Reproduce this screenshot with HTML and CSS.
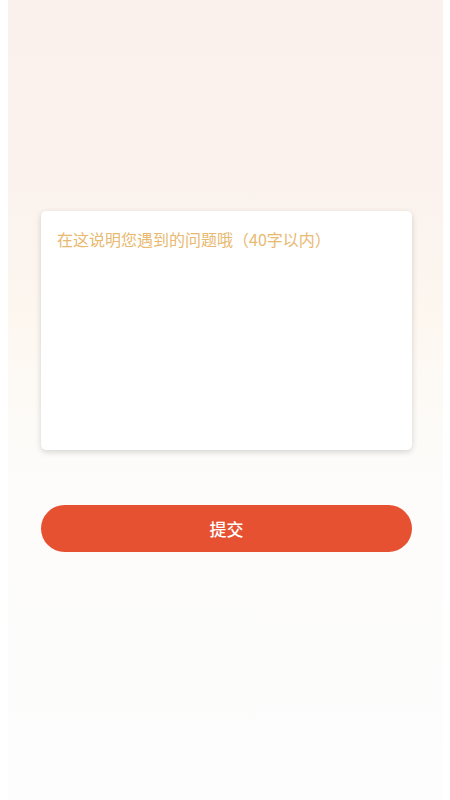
FILE: index.html
```html
<!DOCTYPE html>
<html lang="zh">
<head>
<meta charset="utf-8">
<link rel="stylesheet" href="styles.css">
</head>
<body>
<div class="page">
  <div class="card">
    <textarea class="input" placeholder="在这说明您遇到的问题哦（40字以内）" maxlength="40"></textarea>
  </div>
  <button class="submit">提交</button>
</div>
</body>
</html>
```
FILE: styles.css
```css
html, body {
  margin: 0;
  padding: 0;
  background: #ffffff;
}
body {
  padding: 0 7px 0 8px;
  font-family: "Noto Sans CJK SC", "Noto Sans", sans-serif;
}
.page {
  min-height: 800px;
  box-sizing: border-box;
  padding: 211px 31px 0 33px;
  display: flex;
  flex-direction: column;
  background: linear-gradient(180deg, #fbf1ec 0px, #fbf2ed 180px, #fdf7f0 320px, #fdfbf8 430px, #fdfcfb 520px, #fdfdfd 800px);
}
.card {
  height: 239px;
  background: #ffffff;
  border-radius: 5px;
  box-shadow: 0 2px 6px rgba(0, 0, 0, 0.16);
  box-sizing: border-box;
  padding: 16px 16px;
  display: flex;
}
.input {
  flex: 1;
  border: none;
  outline: none;
  resize: none;
  background: transparent;
  font-family: "Noto Sans CJK SC", "Noto Sans", sans-serif;
  font-size: 16px;
  line-height: 24px;
  padding: 0;
  margin: 0;
  color: #333;
}
.input::placeholder {
  color: #e8b970;
  opacity: 1;
}
.submit {
  margin-top: 55px;
  height: 47px;
  width: 371px;
  border: none;
  border-radius: 24px;
  background: #e65131;
  color: #ffffff;
  font-family: "Noto Sans CJK SC", "Noto Sans", sans-serif;
  font-size: 17px;
  font-weight: 500;
  padding: 0;
}
```
